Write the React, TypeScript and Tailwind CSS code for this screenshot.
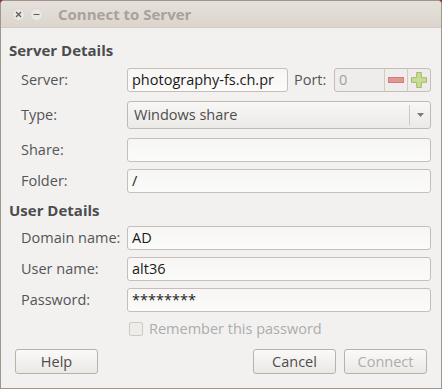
import React from "react";

const font = { fontFamily: '"Open Sans", "DejaVu Sans", sans-serif' };

const Field = ({ children, className = "" }: { children?: React.ReactNode; className?: string }) => (
  <div
    className={`h-[24px] rounded-[3px] border border-[#c7bfb7] bg-gradient-to-b from-[#f7f6f5] to-[#fbfbfa] pl-[4px] flex items-center overflow-hidden whitespace-nowrap text-[14.5px] text-[#1a1a1a] ${className}`}
  >
    {children}
  </div>
);

const Row = ({ label, children, className = "" }: { label: string; children: React.ReactNode; className?: string }) => (
  <div className={`flex items-center pl-[20px] pr-[10px] ${className}`}>
    <div className="w-[106px] shrink-0 text-[14.5px] text-[#555]">{label}</div>
    <div className="flex-1 flex items-center">{children}</div>
  </div>
);

const Button = ({ children, disabled = false }: { children: React.ReactNode; disabled?: boolean }) => (
  <div
    className={`w-[83px] h-[25px] rounded-[3px] border border-[#bab1a8] bg-gradient-to-b from-[#fbfaf9] to-[#ebe8e5] flex items-center justify-center text-[14.5px] ${
      disabled ? "text-[#adadad]" : "text-[#4c4c4c]"
    }`}
  >
    {children}
  </div>
);

export default function App() {
  return (
    <div className="w-[442px] h-[389px] bg-[#8c2c2c]" style={font}>
      <div className="w-[442px] h-[389px] rounded-t-[4px] border border-[#a0968d] bg-[#f2f1f0] flex flex-col overflow-hidden">
        {/* Title bar */}
        <div className="h-[27px] shrink-0 border-b border-[#d2c9c1] bg-gradient-to-b from-[#e5e1da] to-[#dbd5cd] flex items-center pl-[11px]">
          <div className="w-[13px] h-[13px] rounded-full bg-[#ebe8e4] border border-[#dcd7d1] flex items-center justify-center">
            <svg width="7" height="7" viewBox="0 0 7 7">
              <path d="M1 1L6 6M6 1L1 6" stroke="#5e5e5e" strokeWidth="1.3" />
            </svg>
          </div>
          <div className="ml-[5px] w-[13px] h-[13px] rounded-full bg-[#ebe8e4] border border-[#dcd7d1] flex items-center justify-center">
            <svg width="7" height="7" viewBox="0 0 7 7">
              <path d="M0.5 3.5H6.5" stroke="#5e5e5e" strokeWidth="1.2" />
            </svg>
          </div>
          <div className="ml-[15px] text-[15px] font-bold text-[#a8a29b]">Connect to Server</div>
        </div>

        {/* Server details */}
        <div className="mt-[12px] h-[20px] pl-[8px] flex items-center text-[15px] font-bold text-[#4c4c4c]">Server Details</div>

        <Row label="Server:" className="mt-[8px] h-[24px]">
          <Field className="w-[161px]">photography-fs.ch.pr</Field>
          <div className="ml-[6px] text-[14.5px] text-[#555]">Port:</div>
          <div className="ml-auto w-[97px] h-[24px] rounded-[3px] border border-[#c7bfb7] bg-[#efedeb] flex overflow-hidden">
            <div className="flex-1 pl-[4px] flex items-center text-[14.5px] text-[#a0a0a0]">0</div>
            <div className="w-[23px] border-l border-[#d2cbc4] flex items-center justify-center">
              <div className="w-[16px] h-[6px] bg-[#e39696] border border-[#cf7c7c]" />
            </div>
            <div className="w-[23px] border-l border-[#d2cbc4] flex items-center justify-center">
              <svg width="16" height="16" viewBox="0 0 17 17">
                <path d="M6 0.5H11V6H16.5V11H11V16.5H6V11H0.5V6H6Z" fill="#c9dc92" stroke="#a2b86a" />
              </svg>
            </div>
          </div>
        </Row>

        <Row label="Type:" className="mt-[9px] h-[28px]">
          <div className="flex-1 h-[28px] rounded-[3px] border border-[#c2bab2] bg-gradient-to-b from-[#f8f7f6] to-[#eceae7] flex items-center">
            <div className="flex-1 pl-[6px] text-[14.5px] text-[#4c4c4c]">Windows share</div>
            <div className="w-px h-[20px] bg-[#cfc8c1]" />
            <div className="w-[20px] flex items-center justify-center">
              <svg width="7" height="4" viewBox="0 0 7 4">
                <path d="M0 0H7L3.5 4Z" fill="#7a7a7a" />
              </svg>
            </div>
          </div>
        </Row>

        <Row label="Share:" className="mt-[9px] h-[24px]">
          <Field className="flex-1" />
        </Row>

        <Row label="Folder:" className="mt-[7px] h-[24px]">
          <Field className="flex-1">/</Field>
        </Row>

        {/* User details */}
        <div className="mt-[7px] h-[20px] pl-[8px] flex items-center text-[15px] font-bold text-[#4c4c4c]">User Details</div>

        <Row label="Domain name:" className="mt-[6px] h-[24px]">
          <Field className="flex-1">AD</Field>
        </Row>

        <Row label="User name:" className="mt-[7px] h-[24px]">
          <Field className="flex-1">alt36</Field>
        </Row>

        <Row label="Password:" className="mt-[7px] h-[24px]">
          <Field className="flex-1">********</Field>
        </Row>

        <div className="mt-[8px] h-[18px] pl-[128px] flex items-center">
          <div className="w-[14px] h-[14px] rounded-[2px] border border-[#cfc8c1] bg-[#efedeb]" />
          <div className="ml-[6px] text-[14.5px] text-[#acacac]">Remember this password</div>
        </div>

        <div className="mt-[11px] px-[14px] flex items-center">
          <Button>Help</Button>
          <div className="flex-1" />
          <Button>Cancel</Button>
          <div className="w-[8px]" />
          <Button disabled>Connect</Button>
        </div>
      </div>
    </div>
  );
}
